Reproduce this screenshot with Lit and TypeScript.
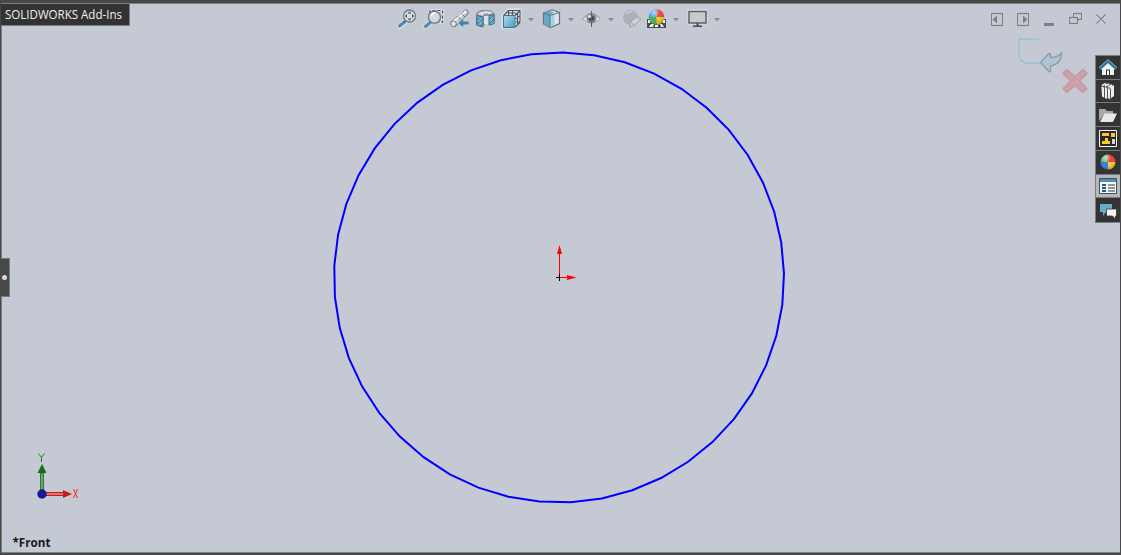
import { LitElement, html, svg, css } from "lit";
import { customElement, property } from "lit/decorators.js";

const arrow = html`<svg class="caret" width="6" height="4" viewBox="0 0 6 4"><path d="M0 0h6L3 3.5z" fill="#8b8d96"/></svg>`;

const ball = (cx: number, cy: number, r: number, [tl, tr, bl, br]: string[]) => svg`
  <path d="M${cx} ${cy}L${cx} ${cy - r}A${r} ${r} 0 0 0 ${cx - r} ${cy}z" fill="${tl}"/>
  <path d="M${cx} ${cy}L${cx} ${cy - r}A${r} ${r} 0 0 1 ${cx + r} ${cy}z" fill="${tr}"/>
  <path d="M${cx} ${cy}L${cx - r} ${cy}A${r} ${r} 0 0 0 ${cx} ${cy + r}z" fill="${bl}"/>
  <path d="M${cx} ${cy}L${cx + r} ${cy}A${r} ${r} 0 0 1 ${cx} ${cy + r}z" fill="${br}"/>
  <circle cx="${cx}" cy="${cy}" r="${r}" fill="url(#shine)"/>`;

const glyphs: Record<string, unknown> = {
  fit: svg`<path d="M1.500 17.500l6-5" stroke="#e0e3e9" stroke-width="5" stroke-linecap="round"/><path d="M1.500 17l5-4" stroke="#4b8eae" stroke-width="3.200" stroke-linecap="round"/><path d="M6 13.300l2-1.700" stroke="#5d6b75" stroke-width="2"/><circle cx="11.500" cy="7" r="6" fill="#d3dfe6" stroke="#74787d" stroke-width="1.300"/><path d="M11.500 2.500l2 2h-4zM11.500 11.500l2-2h-4zM7 7l2-2v4zM16 7l-2-2v4z" fill="#46484a"/>`,
  area: svg`<path d="M6 4V1.500h12.500v12H15" fill="none" stroke="#dadde5" stroke-width="3"/><path d="M6 4V1.500h12.500v12H15" fill="none" stroke="#555" stroke-width="1.200" stroke-dasharray="3 2"/><path d="M1.500 17.500l6-5" stroke="#e0e3e9" stroke-width="5" stroke-linecap="round"/><path d="M1.500 17.500l5-4.300" stroke="#4b8eae" stroke-width="3.200" stroke-linecap="round"/><circle cx="10.500" cy="8.200" r="6" fill="#cedbe2" stroke="#74787d" stroke-width="1.300"/><path d="M7 7q1-3 4-3" fill="none" stroke="#fff" stroke-width="1.400"/>`,
  previous: svg`<path d="M.5 14L6 8.500l3-1.500 5.500-5.500q2-1.500 3.500.5v3l-5 4.500-2 3L5 17.500Q1 18 .5 14z" fill="#c9cacd" stroke="#6f7175"/><path d="M3.500 12L9 8l7-6" fill="none" stroke="#f4f5f6" stroke-width="2"/><path d="M8.500 8l3 4M12 5l3 3" stroke="#75777b" stroke-width=".9"/><ellipse cx="3.500" cy="14.800" rx="2.800" ry="2.900" fill="#e5e6e9" stroke="#74777c"/><path d="M8 14l5.500-4.700v3H19v3.500h-5.500v3z" fill="#3c83ac" stroke="#d4dae1" stroke-width=".5"/>`,
  section: svg`<path d="M.5 5Q2 1.500 9 1.500T18 5v9.500l-4 1V7H8v9l-2 2-5.500-2z" fill="#a9acb0" stroke="#777a80"/><path d="M8 7h5v8H8z" fill="#dfe1e4"/><path d="M.5 5.500Q3 1.500 9.500 1.500T18 4.500L13 6q-1-1.500-3.500-1T7 7.500z" fill="#dcdee1" stroke="#85888c"/><path d="M1 6.500L7 8v10l-6-2zM13 7l5-2v9.500l-5 1.500z" fill="#79b5ce" stroke="#38748d"/><path d="M1.500 11l4-4M1.500 15L7 9.500M4 17l3-3M13 10.500L17.500 6M13 15l5-5" stroke="#2b6b89"/>`,
  orient: svg`<path d="M0 6L6 0h13v13l-6 6H0z" fill="#d9dde4" stroke="#e2e5eb"/><path d="M1.500 6.500L6.500 1.500H18v12L13.500 18M6.500 1.500V6M13 6.500l5-5M14 13h4M10.500 2v4M7 4h7M15.500 4v11M13.500 9.500L18 7" fill="none" stroke="#505359" stroke-width="1.100"/><path d="M1.500 6.500h11.500v12H1.500z" fill="url(#blue)" stroke="#357795"/>`,
  display: svg`<path d="M1.500 4L10 .8l7.500 2.700v11l-9 4-7-3.500z" fill="#dfe2e6" stroke="#6b7077" stroke-width="1.200"/><path d="M2 4l5-2 5 1.500L8 6v12l-6-3z" fill="#65a8c5"/><path d="M8 6l4.500-1v11L8 18z" fill="#a5d0df"/><path d="M1.500 4L8 6.300l9.500-2.800M8 6v12" fill="none" stroke="#427f9b"/>`,
  eye: svg`<path d="M.5 10q9-9 18 0-9 8-18 0z" fill="#e0e3e8" stroke="#a3a6ad"/><path d="M1.500 8.500q8-8.500 16 0" fill="none" stroke="#9b9ea5"/><circle cx="9.500" cy="9.500" r="5" fill="#85888c"/><circle cx="9.500" cy="9.500" r="2.700" fill="#46484c"/><circle cx="7.500" cy="7.500" r="1.500" fill="#e6e8ed"/><path d="M9.500 2v16" stroke="#606368"/>`,
  appearance: svg`<circle cx="8.500" cy="8.500" r="7.500" fill="#acb0b9"/><path d="M4 5q3-3 6-2" stroke="#c3c7cf" stroke-width="2"/><path d="M7.500 18l1-4.500L15.500 7l3.500 3-7 6.500z" fill="#d0d3d9" stroke="#a0a4ac"/><path d="M9 13l3 3M14 8l3.500 3" stroke="#a4a8b0"/>`,
  scene: svg`<path d="M0 10h19v9H0z" fill="#4a4b4d"/><path d="M1 11h2v3H1zM16 11h2v3h-2zM2 18l2-3h3l-1 3zM8 16h3v2H8zM13 15h2l2 3h-3z" fill="#f1f1f2"/>${ball(9.5, 8, 7.8, ["#3c9be0", "#e34a42", "#46b24e", "#f5c92a"])}`,
  monitor: svg`<path d="M.5 1.500h18v13H.5z" stroke="#dfe1e6" stroke-width="2"/><path d="M1 2.500h17v11.500H1z" fill="#c8cbce" stroke="#5d6064" stroke-width="1.500"/><path d="M8.500 14h2v3.500h-2zM5 16.500h9V18H5z" fill="#4b4d50"/>`,
  home: svg`<path d="M5 10v7h12v-7l-6-5z" fill="#f3f3f3"/><path d="M3 10.500L11 3.500l8 7" stroke="#b8d5e2" stroke-width="3.500"/><path d="M3 10.500L11 3.500l8 7" stroke="#226f97" stroke-width="2.300"/><path d="M9 11.500h4V17H9z" fill="#333"/><path d="M10 12.500h2V17h-2z" fill="#fff"/>`,
  library: svg`<path d="M4 4l4-3 2 1 2-1 2 1 3 1v11l-4 4-8-3z" fill="#555"/><path d="M4.500 4.500L7 5.500v10l-2-1zM8 5l2 1v11l-2-1zM11 6l2 1v10l-2-1zM14 6l3-2v10l-3 2z" fill="#ececec"/><path d="M5 3.500l4-2M8 4l4-2M11 5l4-2M13 6l4-2" stroke="#f2f2f2" stroke-width="1.400"/>`,
  folder: svg`<path d="M2 16V4h6l2 2h6v3H8z" fill="#a8a8a8"/><path d="M3 17L7.500 8.500H20L16 17z" fill="#e8e8e8"/>`,
  palette: svg`<path d="M2.500 1.500h17v16h-17z" fill="#282828" stroke="#f4f4f4"/><path d="M5 4h7v3H5zM14 4h4v4h-4zM8 9h3v3h2v3H5v-3h3z" fill="#f5c929"/><path d="M15 10h3v5h-3z" fill="#d7d7d7"/>`,
  colors: svg`${ball(11, 9, 7.5, ["#58b45a", "#ef3a33", "#2f7ce0", "#ffd02a"])}`,
  properties: svg`<path d="M2.500 2.500h17v15h-17z" fill="#f5f7f8" stroke="#315365"/><path d="M3 3h16v3H3z" fill="#528caa"/><path d="M5 8h4v2H5zM5 11h4v2H5zM5 14h4v2H5z" fill="#285b78"/><path d="M11 9h7M11 12h7M11 15h7" stroke="#333"/>`,
  forum: svg`<path d="M3 3h12v8H9l-3 4v-4H3z" fill="#6faac5"/><path d="M9.500 8h10v7h-1v3l-3-3h-6z" fill="#f3f3f3" stroke="#343434" stroke-width=".8"/>`,
};

@customElement("sw-icon")
class SwIcon extends LitElement {
  static styles = css`:host{display:block;width:21px;height:20px;flex:none}svg{display:block;overflow:visible}`;
  @property() name = "";
  render() {
    return html`<svg width="21" height="20" viewBox="0 0 21 20" fill="none"><defs><linearGradient id="blue" x2="1" y2="1"><stop stop-color="#b1ddea"/><stop offset="1" stop-color="#4f9abd"/></linearGradient><radialGradient id="shine" cx=".35" cy=".22" r=".75"><stop stop-color="#fff" stop-opacity=".65"/><stop offset=".5" stop-color="#fff" stop-opacity="0"/><stop offset="1" stop-color="#17314e" stop-opacity=".22"/></radialGradient></defs>${glyphs[this.name]}</svg>`;
  }
}

@customElement("app-root")
class AppRoot extends LitElement {
  static styles = css`
    :host{display:block;width:1121px;height:555px;font-family:"Open Sans",sans-serif}
    .app{position:relative;box-sizing:border-box;width:1121px;height:555px;overflow:hidden;background:#c5c9d4;border-style:solid;border-color:#484947;border-width:3px 1px 2px 1px}
    .view{box-sizing:border-box;width:1119px;height:550px;border:solid #7b7c7e;border-width:1px 0 1px 1px}
    .scene{position:absolute;left:-1px;top:-3px;pointer-events:none}
    .header{display:flex;height:30px;padding:5px 14px 0 396px;box-sizing:border-box}
    .tools{display:flex;flex:1}
    .tool{display:flex;align-items:center;height:20px}
    .caret{margin:1px 0 0 5px}
    .windows{display:block}
    .tip{position:absolute;left:-1px;top:0;width:130px;height:23px;box-sizing:border-box;border:solid #7b7c7e;border-width:1px 1px 1px 0;background:#333;display:flex}
    .tip svg{display:block}
    .dock{position:absolute;right:-1px;top:52px;width:26px;height:168px;box-sizing:border-box;background:#343434;border:1px solid #7b7c7e;border-right:0;display:grid;grid-template-rows:repeat(7,1fr)}
    .tab{display:flex;align-items:center;padding:1px 0 0 1px;border-bottom:1px solid #7b7c7e}
    .tab:last-child{border:0}.active{background:#b7b7b7}
    .handle{position:absolute;left:-1px;top:255px;width:10px;height:39px;box-sizing:border-box;border:1px solid #7b7c7e;border-left:0;background:#484848;display:grid;place-items:center}
    .dot{width:5px;height:5px;border-radius:50%;background:#dadada}
  `;
  private tools = [
    ["fit", 26, 0], ["area", 26, 0], ["previous", 26, 0], ["section", 26, 0], ["orient", 40, 1],
    ["display", 40, 1], ["eye", 40, 1], ["appearance", 25, 0], ["scene", 41, 1], ["monitor", 40, 1],
  ] as [string, number, number][];
  render() {
    const points = Array.from({ length: 45 }, (_, i) => {
      const a = (1 + i * 8) * Math.PI / 180;
      return `${(559 + 225 * Math.sin(a)).toFixed(1)},${(277.5 - 225 * Math.cos(a)).toFixed(1)}`;
    }).join(" ");
    return html`<div class="app">
      <div class="view"><div class="header"><div class="tools">${this.tools.map(([name, width, menu]) => html`<div class="tool" style="width:${width}px"><sw-icon name=${name}></sw-icon>${menu ? arrow : ""}</div>`)}</div>
        <svg class="windows" width="116" height="20" viewBox="0 0 116 20" fill="none"><g stroke="#d5d8e0" stroke-width="3"><path d="M1.500 4.500h11v12h-11zM27.500 4.500h11v12h-11zM53 15.500h12M79.500 8.500h8v6h-8zM83.500 8V4.500h8v6h-4M106.500 5.500l9 9m0-9l-9 9"/></g><g stroke="#7e8085" stroke-width="1.300"><path d="M1.500 4.500h11v12h-11zM27.500 4.500h11v12h-11zM79.500 8.500h8v6h-8zM83.500 8V4.500h8v6h-4M106.500 5.500l9 9m0-9l-9 9"/></g><path d="M7 6.500v8L2.500 10.500zM33 6.500v8l4.500-4zM54 14h10v3H54z" fill="#7e8085"/></svg>
      </div></div>
      <svg class="scene" width="1121" height="555" viewBox="0 0 1121 555">
        <path d="M612 0h60v1h-60z" fill="#111"/><path d="M20 .5h1M391 .5h1M522 .5h1M567 .5h1" stroke="#aaa"/>
        <polygon points=${points} fill="none" stroke="#00f" stroke-width="2"/>
        <path d="M559.500 277V252M560 277.500h8" stroke="red"/><path d="M559.500 245l2.500 9h-5zM576.500 277.500l-9.500-2.500v5z" fill="red"/><path d="M556 277.500h4M559.500 274v7" stroke="#000"/>
        <path d="M40.500 493V473h3v20z" fill="#64a865" stroke="#236225" stroke-width=".8"/><path d="M42 464l4.500 9H37.500z" fill="#176b1b"/><path d="M44 492.500h20v3H44z" fill="#ef6d6e" stroke="#b92020"/><path d="M72 494l-9-4v8z" fill="#c51c1c"/><circle cx="42" cy="494" r="4.700" fill="#181c99"/>
        <path d="M38.500 453.500l3 4 3-4M41.500 457v5" fill="none" stroke="#128715"/><path d="M73.500 489l4 9M77.500 489l-4 9" stroke="#f22"/>
        <text x="12.500" y="547" font-family="Open Sans" font-size="12" font-weight="bold" textLength="38" lengthAdjust="spacingAndGlyphs" fill="#171719">*Front</text>
        <path d="M1039 39h-20V54q0 9 9 9h12" fill="none" stroke="#bccbd8" stroke-width="3"/><path d="M1039 39h-20V54q0 9 9 9h12" fill="none" stroke="#a0bfd2" stroke-width="1.600"/>
        <path d="M1040.500 62.500l8.500-9q2 0 1.500 4 7 0 11-4.500 0 11-11 13v5.500q-1 1-2-.5z" fill="#afc5d1" stroke="#839fac" stroke-width="1.300"/>
        <path d="M1063 73.500l4-4 8 7 8-7 4 4-7.500 7.500 7.500 7.500-4 4-8-7-8 7-4-4 7.500-7.500z" fill="#cda1a8" stroke="#c49aa4" stroke-linejoin="round" stroke-width="1.500"/>
      </svg>
      <div class="tip"><svg width="129" height="21"><text x="5" y="15" font-size="12" fill="#f1f1f1" textLength="117" lengthAdjust="spacingAndGlyphs">SOLIDWORKS Add-Ins</text></svg></div>
      <div class="handle"><div class="dot"></div></div>
      <div class="dock">${["home", "library", "folder", "palette", "colors", "properties", "forum"].map(name => html`<div class="tab ${name === "properties" ? "active" : ""}"><sw-icon name=${name}></sw-icon></div>`)}</div>
    </div>`;
  }
}
